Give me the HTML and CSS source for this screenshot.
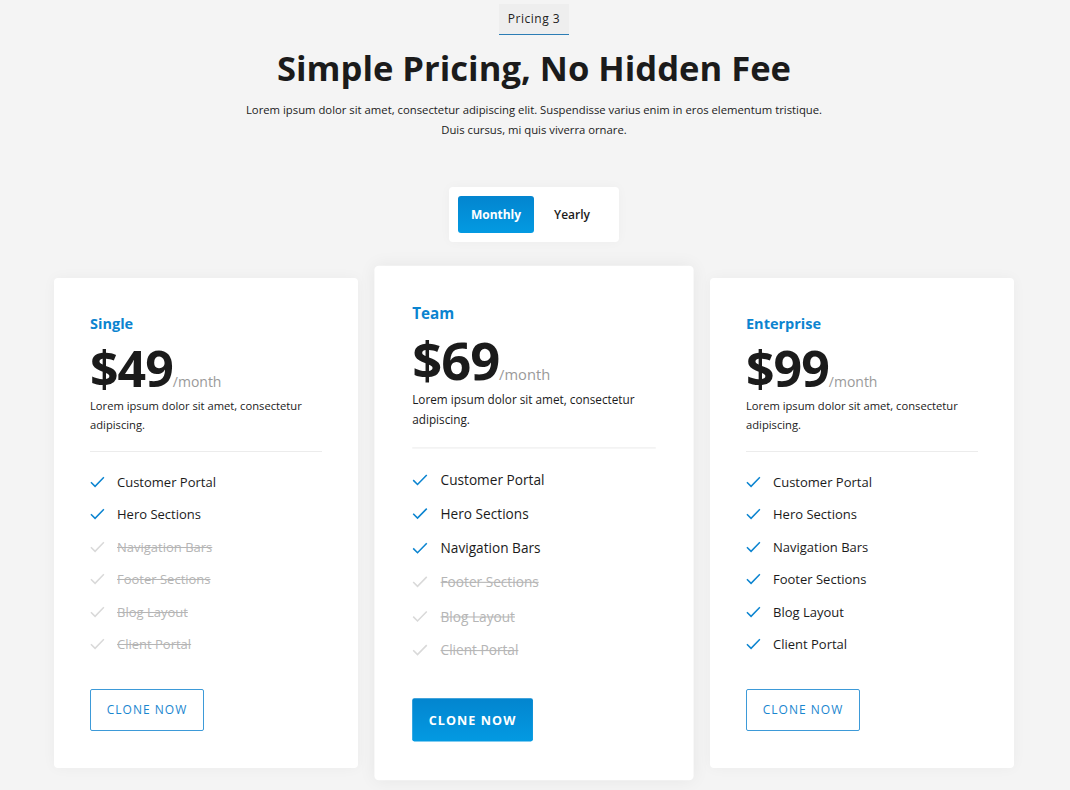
FILE: index.html
```html
<!DOCTYPE html>
<html lang="en">
<head>
<meta charset="utf-8">
<title>Pricing 3</title>
<link rel="stylesheet" href="styles.css">
</head>
<body>
<main class="page">
  <header class="intro">
    <span class="tag">Pricing 3</span>
    <h1 class="title">Simple Pricing, No Hidden Fee</h1>
    <p class="lead">Lorem ipsum dolor sit amet, consectetur adipiscing elit. Suspendisse varius enim in eros elementum tristique.<br>Duis cursus, mi quis viverra ornare.</p>
  </header>

  <div class="toggle">
    <button class="toggle-btn is-active">Monthly</button>
    <button class="toggle-btn">Yearly</button>
  </div>

  <section class="plans">
    <article class="card">
      <h2 class="plan-name">Single</h2>
      <div class="price"><span class="amount">$49</span><span class="period">/month</span></div>
      <p class="desc">Lorem ipsum dolor sit amet, consectetur adipiscing.</p>
      <ul class="features">
        <li class="feature"><svg class="check" viewBox="0 0 16 12"><path d="M1 6.2 L5.4 10.6 L14.8 1"/></svg>Customer Portal</li>
        <li class="feature"><svg class="check" viewBox="0 0 16 12"><path d="M1 6.2 L5.4 10.6 L14.8 1"/></svg>Hero Sections</li>
        <li class="feature is-off"><svg class="check" viewBox="0 0 16 12"><path d="M1 6.2 L5.4 10.6 L14.8 1"/></svg><span class="label">Navigation Bars</span></li>
        <li class="feature is-off"><svg class="check" viewBox="0 0 16 12"><path d="M1 6.2 L5.4 10.6 L14.8 1"/></svg><span class="label">Footer Sections</span></li>
        <li class="feature is-off"><svg class="check" viewBox="0 0 16 12"><path d="M1 6.2 L5.4 10.6 L14.8 1"/></svg><span class="label">Blog Layout</span></li>
        <li class="feature is-off"><svg class="check" viewBox="0 0 16 12"><path d="M1 6.2 L5.4 10.6 L14.8 1"/></svg><span class="label">Client Portal</span></li>
      </ul>
      <a class="btn btn-outline" href="#">Clone Now</a>
    </article>

    <article class="card card-featured">
      <h2 class="plan-name">Team</h2>
      <div class="price"><span class="amount">$69</span><span class="period">/month</span></div>
      <p class="desc">Lorem ipsum dolor sit amet, consectetur adipiscing.</p>
      <ul class="features">
        <li class="feature"><svg class="check" viewBox="0 0 16 12"><path d="M1 6.2 L5.4 10.6 L14.8 1"/></svg>Customer Portal</li>
        <li class="feature"><svg class="check" viewBox="0 0 16 12"><path d="M1 6.2 L5.4 10.6 L14.8 1"/></svg>Hero Sections</li>
        <li class="feature"><svg class="check" viewBox="0 0 16 12"><path d="M1 6.2 L5.4 10.6 L14.8 1"/></svg>Navigation Bars</li>
        <li class="feature is-off"><svg class="check" viewBox="0 0 16 12"><path d="M1 6.2 L5.4 10.6 L14.8 1"/></svg><span class="label">Footer Sections</span></li>
        <li class="feature is-off"><svg class="check" viewBox="0 0 16 12"><path d="M1 6.2 L5.4 10.6 L14.8 1"/></svg><span class="label">Blog Layout</span></li>
        <li class="feature is-off"><svg class="check" viewBox="0 0 16 12"><path d="M1 6.2 L5.4 10.6 L14.8 1"/></svg><span class="label">Client Portal</span></li>
      </ul>
      <a class="btn btn-solid" href="#">Clone Now</a>
    </article>

    <article class="card">
      <h2 class="plan-name">Enterprise</h2>
      <div class="price"><span class="amount">$99</span><span class="period">/month</span></div>
      <p class="desc">Lorem ipsum dolor sit amet, consectetur adipiscing.</p>
      <ul class="features">
        <li class="feature"><svg class="check" viewBox="0 0 16 12"><path d="M1 6.2 L5.4 10.6 L14.8 1"/></svg>Customer Portal</li>
        <li class="feature"><svg class="check" viewBox="0 0 16 12"><path d="M1 6.2 L5.4 10.6 L14.8 1"/></svg>Hero Sections</li>
        <li class="feature"><svg class="check" viewBox="0 0 16 12"><path d="M1 6.2 L5.4 10.6 L14.8 1"/></svg>Navigation Bars</li>
        <li class="feature"><svg class="check" viewBox="0 0 16 12"><path d="M1 6.2 L5.4 10.6 L14.8 1"/></svg>Footer Sections</li>
        <li class="feature"><svg class="check" viewBox="0 0 16 12"><path d="M1 6.2 L5.4 10.6 L14.8 1"/></svg>Blog Layout</li>
        <li class="feature"><svg class="check" viewBox="0 0 16 12"><path d="M1 6.2 L5.4 10.6 L14.8 1"/></svg>Client Portal</li>
      </ul>
      <a class="btn btn-outline" href="#">Clone Now</a>
    </article>
  </section>
</main>
</body>
</html>
```

FILE: styles.css
```css
* { box-sizing: border-box; }

html, body {
  margin: 0;
  padding: 0;
  background: #f4f4f4;
}

body {
  font-family: "Open Sans", "Noto Sans", "Liberation Sans", sans-serif;
  color: #1b1b1b;
}

.page {
  display: flex;
  flex-direction: column;
  align-items: center;
  padding-top: 4px;
  padding-right: 2px;
}

.intro {
  display: flex;
  flex-direction: column;
  align-items: center;
  text-align: center;
}

.tag {
  display: inline-block;
  height: 31px;
  line-height: 30px;
  padding: 0 9px;
  font-size: 12px;
  letter-spacing: 0.5px;
  color: #222222;
  background: #eeeeee;
  border-bottom: 1px solid #2c7db5;
}

.title {
  margin: 13px 0 0;
  font-size: 34.6px;
  line-height: 40px;
  font-weight: 700;
  color: #1b1b1b;
}

.lead {
  margin: 12px 0 0;
  font-size: 11.3px;
  line-height: 20px;
  color: #1b1b1b;
}

.toggle {
  display: flex;
  margin-top: 47px;
  padding: 9px;
  background: #ffffff;
  border-radius: 4px;
  box-shadow: 0 0 12px rgba(0, 0, 0, 0.03);
}

.toggle-btn {
  width: 76px;
  height: 37px;
  border: 0;
  border-radius: 3px;
  background: transparent;
  font-family: inherit;
  font-size: 12px;
  font-weight: 600;
  color: #1b1b1b;
  cursor: pointer;
}

.toggle-btn.is-active {
  color: #ffffff;
  font-weight: 700;
  background: linear-gradient(180deg, #0385cf 0%, #039ae2 100%);
}

.plans {
  display: grid;
  grid-template-columns: repeat(3, 304px);
  column-gap: 24px;
  align-items: start;
  margin-top: 36px;
  padding-bottom: 30px;
}

.card {
  display: flex;
  flex-direction: column;
  align-items: flex-start;
  height: 490px;
  padding: 36px 36px 37px;
  background: #ffffff;
  border-radius: 4px;
  box-shadow: 0 0 14px rgba(0, 0, 0, 0.04);
}

.card-featured {
  transform: scale(1.05);
  box-shadow: 0 0 16px rgba(0, 0, 0, 0.06);
}

.plan-name {
  margin: 0;
  font-size: 14.5px;
  line-height: 20px;
  font-weight: 700;
  color: #0b84d0;
}

.price {
  display: flex;
  align-items: baseline;
  margin-top: 9px;
  line-height: 1;
}

.amount {
  font-size: 50px;
  font-weight: 700;
  letter-spacing: -1px;
  color: #1b1b1b;
}

.period {
  margin-left: 0;
  font-size: 14px;
  color: #9a9a9a;
}

.desc {
  margin: 3px 0 0;
  font-size: 11.2px;
  line-height: 19px;
  color: #1b1b1b;
}

.features {
  align-self: stretch;
  list-style: none;
  margin: 17px 0 0;
  padding: 20px 0 0;
  border-top: 1px solid #ececec;
  display: flex;
  flex-direction: column;
  gap: 12.4px;
}

.feature {
  display: flex;
  align-items: center;
  height: 20px;
  font-size: 13px;
  font-weight: 500;
  color: #1b1b1b;
}

.check {
  width: 15px;
  height: 12px;
  margin-right: 12px;
  flex: none;
  fill: none;
  stroke: #0b84d0;
  stroke-width: 1.6;
}

.feature.is-off {
  color: #b5b5b5;
}

.feature.is-off .check {
  stroke: #d9d9d9;
}

.feature.is-off .label {
  text-decoration: line-through;
}

.btn {
  display: inline-flex;
  align-items: center;
  justify-content: center;
  height: 42px;
  margin-top: 35px;
  padding: 0;
  border-radius: 2px;
  font-size: 12px;
  font-weight: 500;
  letter-spacing: 1px;
  white-space: nowrap;
  text-transform: uppercase;
  text-decoration: none;
}

.btn-outline {
  width: 114px;
  color: #1a86cf;
  border: 1px solid #3d9ad8;
  background: #ffffff;
}

.btn-solid {
  width: 115px;
  height: 41px;
  margin-top: 36px;
  color: #ffffff;
  font-weight: 700;
  background: linear-gradient(180deg, #0385cf 0%, #039ae2 100%);
  border: 0;
}
```
